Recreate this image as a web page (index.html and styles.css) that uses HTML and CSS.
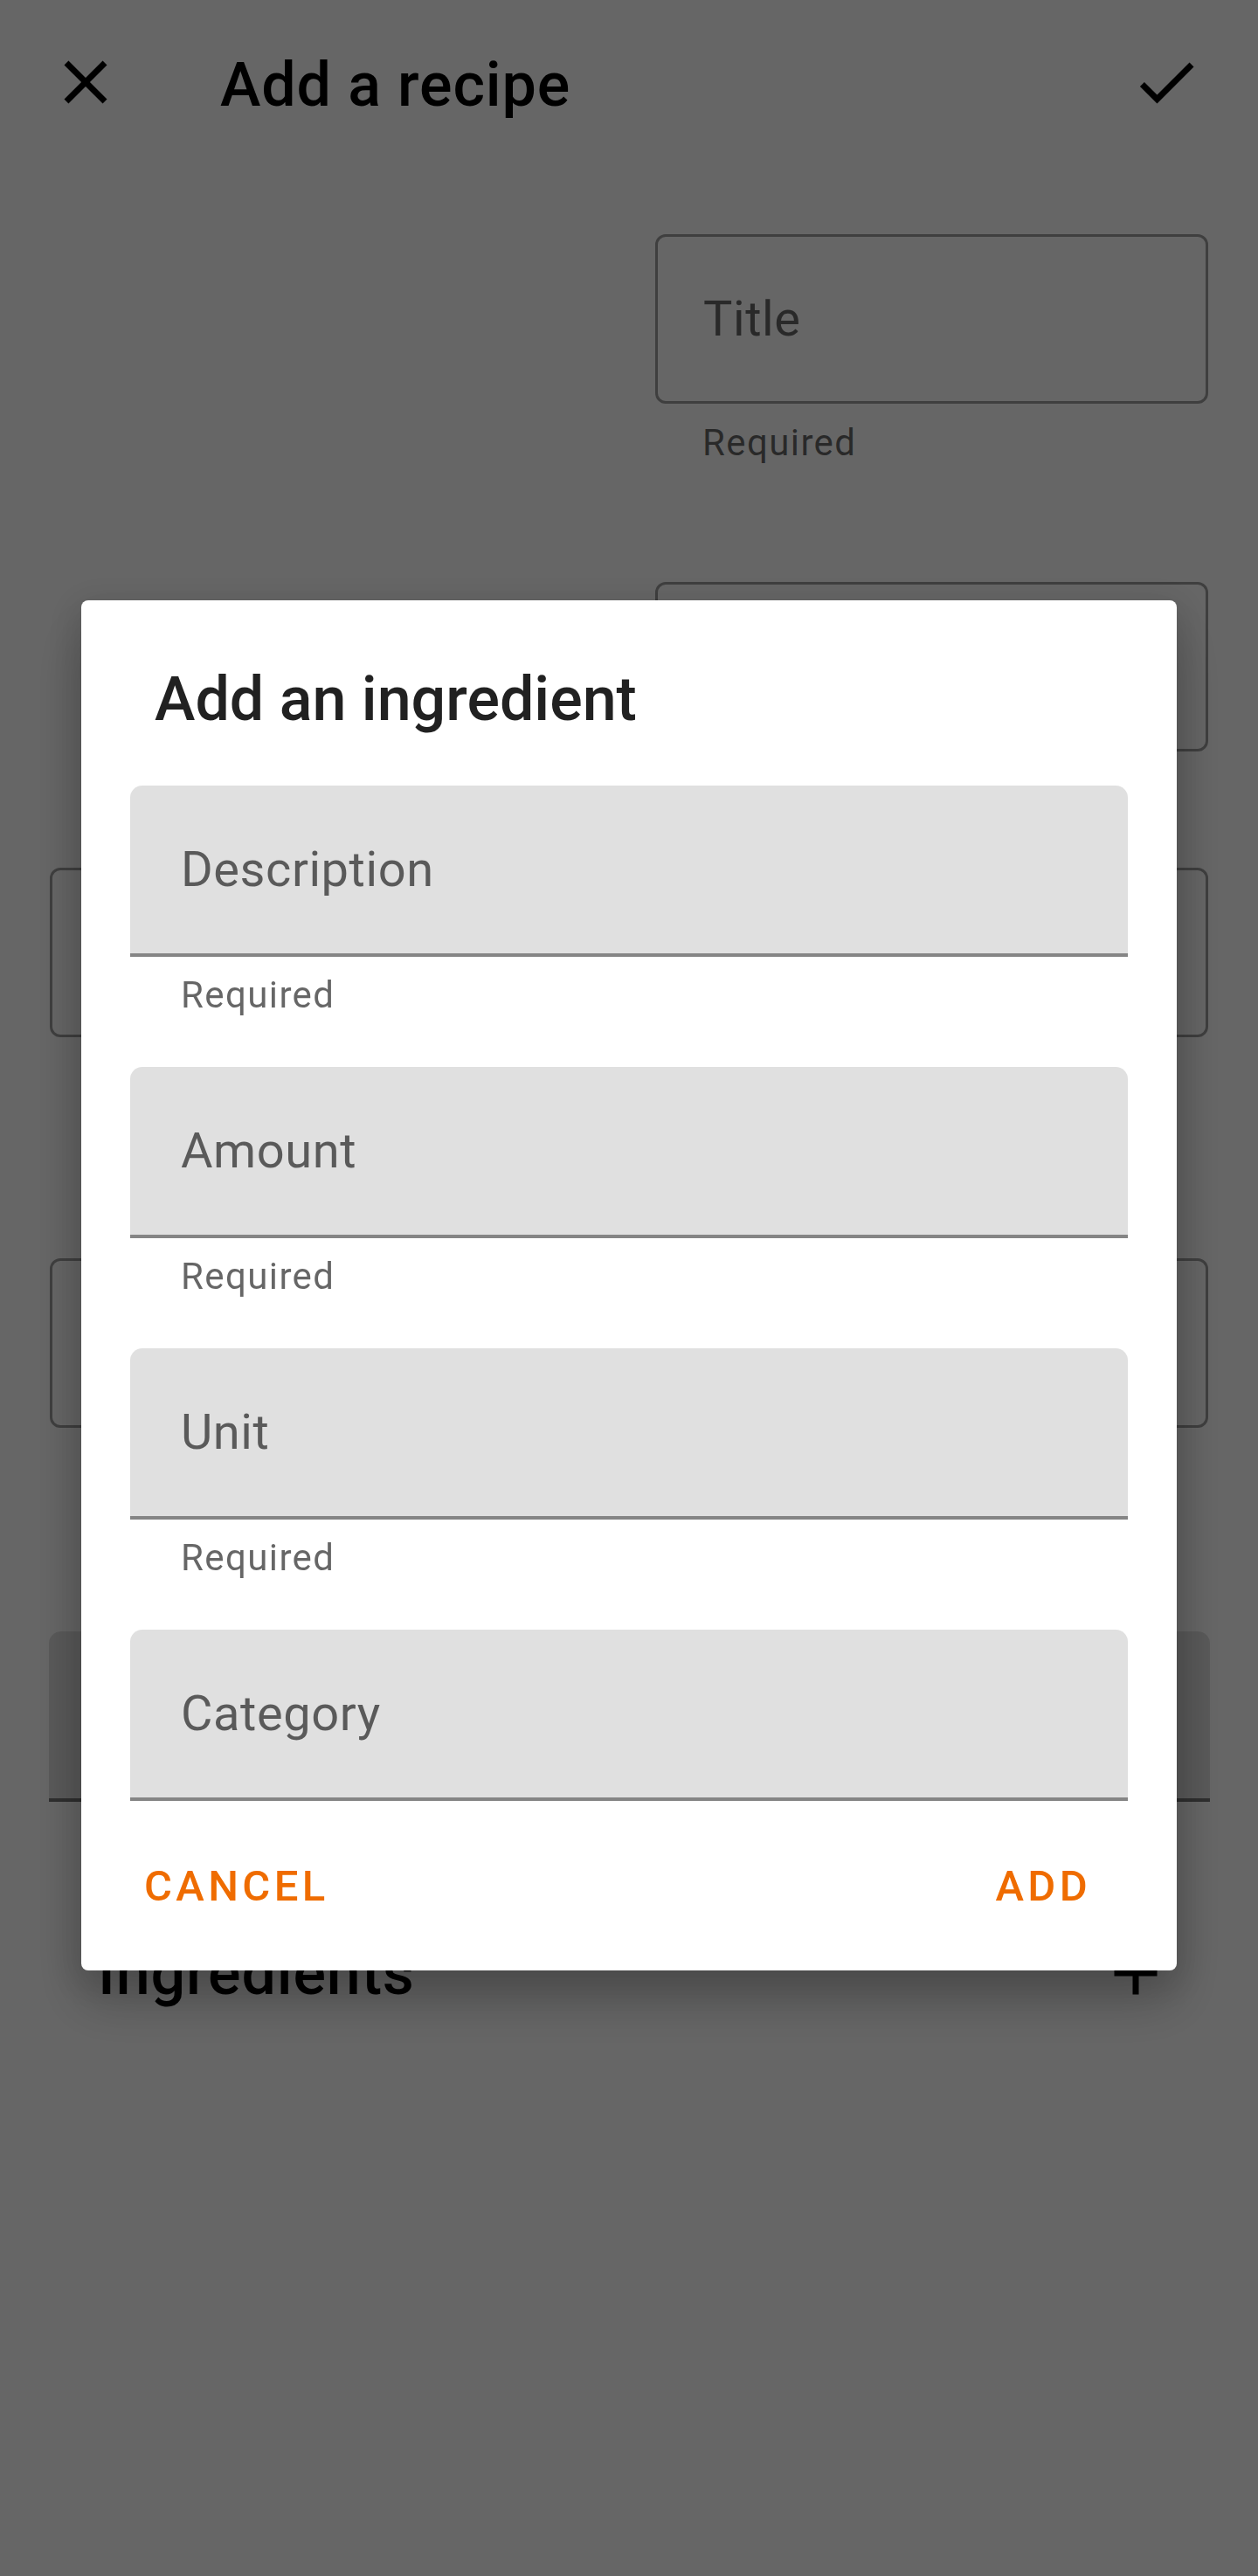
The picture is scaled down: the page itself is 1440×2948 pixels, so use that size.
FILE: index.html
```html
<!DOCTYPE html>
<html lang="en">
<head>
    <meta charset="UTF-8">
    <meta name="viewport" content="width=device-width, initial-scale=1.0">
    <title>Add a recipe</title>
    <link rel="stylesheet" href="styles.css">
</head>
<body>
    <!-- the recipe form behind the dialog -->
    <div class="page">
        <header class="toolbar">
            <button class="icon-btn" aria-label="Close">
                <svg viewBox="0 0 24 24"><path d="M19 6.41L17.59 5 12 10.59 6.41 5 5 6.41 10.59 12 5 17.59 6.41 19 12 13.41 17.59 19 19 17.59 13.41 12z"/></svg>
            </button>
            <h1 class="toolbar-title">Add a recipe</h1>
            <button class="icon-btn save" aria-label="Save">
                <svg viewBox="0 0 24 24"><path d="M9 16.17L4.83 12l-1.42 1.41L9 19 21 7l-1.41-1.41z"/></svg>
            </button>
        </header>

        <div class="form">
            <div class="top-row">
                <div class="image-slot"></div>
                <div class="right-col">
                    <div class="outlined">Title</div>
                    <div class="helper">Required</div>
                    <div class="outlined second"></div>
                </div>
            </div>

            <!-- these sit behind the dialog, only their edges show -->
            <div class="outlined third"></div>
            <div class="outlined fourth"></div>
            <div class="filled-bg"></div>

            <div class="section-row">
                <h2 class="section-title">Ingredients</h2>
                <button class="icon-btn" aria-label="Add ingredient">
                    <svg viewBox="0 0 24 24"><path d="M19 13h-6v6h-2v-6H5v-2h6V5h2v6h6v2z"/></svg>
                </button>
            </div>
        </div>
    </div>

    <!-- modal -->
    <div class="scrim">
        <div class="dialog">
            <h2 class="dialog-title">Add an ingredient</h2>

            <div class="field">Description</div>
            <div class="dialog-helper">Required</div>

            <div class="field">Amount</div>
            <div class="dialog-helper">Required</div>

            <div class="field">Unit</div>
            <div class="dialog-helper">Required</div>

            <div class="field">Category</div>

            <div class="actions">
                <button class="text-btn">Cancel</button>
                <button class="text-btn">Add</button>
            </div>
        </div>
    </div>
</body>
</html>
```

FILE: styles.css
```css
body {
    margin: 0;
    font-family: Roboto, "Liberation Sans", sans-serif;
    background-color: #fff;
    color: #000;
}

button {
    font-family: inherit;
    background: none;
    border: none;
    padding: 0;
    cursor: pointer;
}

/* ツールバー */
.toolbar {
    display: flex;
    align-items: center;
    height: 188px;
    padding: 0 63px 0 56px;
}

.icon-btn {
    width: 84px;
    height: 84px;
    flex-shrink: 0;
}

.icon-btn svg {
    display: block;
    width: 84px;
    height: 84px;
    fill: #000;
}

.toolbar-title {
    flex-grow: 1;
    margin: 0 0 0 112px;
    padding-top: 6px;
    font-size: 70px;
    line-height: 82px;
    font-weight: 500;
    letter-spacing: 0.0125em;
}

/* フォーム */
.form {
    padding: 80px 57px 0;
}

.top-row {
    display: grid;
    grid-template-columns: 1fr 633px;
}

.outlined {
    box-sizing: border-box;
    height: 194px;
    display: flex;
    align-items: center;
    padding-left: 52px;
    border: 3px solid rgba(0, 0, 0, 0.38);
    border-radius: 12px;
    font-size: 56px;
    line-height: 66px;
    letter-spacing: 0.01em;
    color: rgba(0, 0, 0, 0.6);
}

.helper {
    margin-top: 20px;
    padding-left: 54px;
    font-size: 42px;
    line-height: 49px;
    letter-spacing: 0.0333em;
    color: rgba(0, 0, 0, 0.6);
}

.outlined.second {
    margin-top: 135px;
}

.outlined.third {
    margin-top: 133px;
}

.outlined.fourth {
    margin-top: 253px;
}

.filled-bg {
    box-sizing: border-box;
    height: 195px;
    margin: 233px -2px 0 -1px;
    background-color: #e0e0e0;
    border-bottom: 4px solid #757575;
    border-radius: 14px 14px 0 0;
}

.section-row {
    display: flex;
    align-items: center;
    justify-content: space-between;
    margin-top: 154px;
    padding: 0 41px 0 55px;
}

.section-title {
    margin: 0;
    font-size: 70px;
    line-height: 82px;
    font-weight: 500;
    letter-spacing: 0.0125em;
}

/* ダイアログ */
.scrim {
    position: fixed;
    top: 0;
    left: 0;
    right: 0;
    bottom: 0;
    background-color: rgba(0, 0, 0, 0.6);
    padding: 687px 93px 0;
}

.dialog {
    width: 1254px;
    background-color: #fff;
    border-radius: 8px;
    padding-top: 72px;
    box-sizing: border-box;
    box-shadow: 0 36px 60px rgba(0, 0, 0, 0.22), 0 10px 40px 12px rgba(0, 0, 0, 0.1);
}

.dialog-title {
    margin: 0 0 58px;
    padding-left: 84px;
    font-size: 70px;
    line-height: 82px;
    font-weight: 500;
    color: rgba(0, 0, 0, 0.87);
}

.field {
    box-sizing: border-box;
    height: 196px;
    margin: 0 56px;
    display: flex;
    align-items: center;
    padding-left: 58px;
    background-color: #e0e0e0;
    border-bottom: 4px solid #858585;
    border-radius: 14px 14px 0 0;
    font-size: 56px;
    line-height: 66px;
    letter-spacing: 0.01em;
    color: rgba(0, 0, 0, 0.6);
}

.dialog-helper {
    margin: 19px 56px 58px;
    padding-left: 58px;
    font-size: 42px;
    line-height: 49px;
    letter-spacing: 0.0333em;
    color: rgba(0, 0, 0, 0.6);
}

.actions {
    display: flex;
    justify-content: space-between;
    align-items: center;
    height: 194px;
    padding: 0 98px 0 72px;
}

.text-btn {
    font-size: 49px;
    line-height: 57px;
    font-weight: 500;
    letter-spacing: 0.0892857em;
    text-transform: uppercase;
    color: #ef6c00;
}
```
